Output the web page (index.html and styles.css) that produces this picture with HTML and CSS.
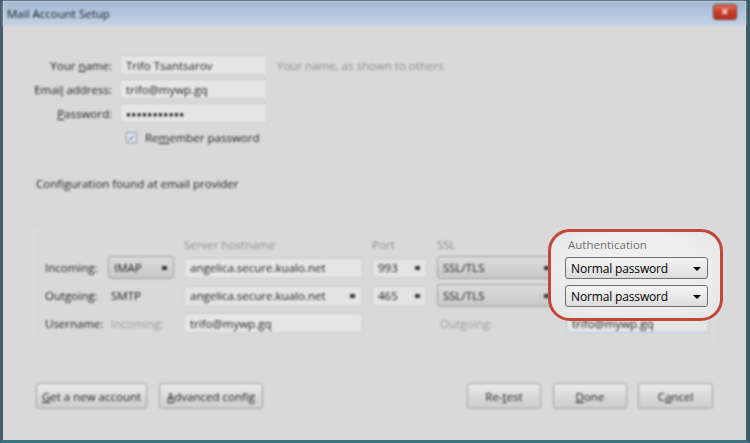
FILE: index.html
```html
<!DOCTYPE html>
<html>
<head>
<meta charset="utf-8">
<link rel="stylesheet" href="styles.css">
</head>
<body>
<div class="window">
  <div class="titlebar blur">
    <span class="title">Mail Account Setup</span>
    <div class="close">✕</div>
  </div>
  <div class="content blur">
    <div class="ident">
      <label class="lbl">Your <u>n</u>ame:</label>
      <div class="input">Trifo Tsantsarov</div>
      <span class="hint">Your name, as shown to others</span>
      <label class="lbl">Emai<u>l</u> address:</label>
      <div class="input">trifo@mywp.gq</div>
      <span></span>
      <label class="lbl"><u>P</u>assword:</label>
      <div class="input dots">●●●●●●●●●●●</div>
      <span></span>
      <span></span>
      <div class="remember"><span class="check">✓</span><span>Re<u>m</u>ember password</span></div>
      <span></span>
    </div>
    <div class="status">Configuration found at email provider</div>
    <div class="panel">
      <span></span>
      <span></span>
      <span class="head">Server hostname</span>
      <span class="head">Port</span>
      <span class="head">SSL</span>
      <span class="head"></span>

      <span class="rowlbl">Incoming:</span>
      <div class="select">IMAP<i class="arr"></i></div>
      <div class="input">angelica.secure.kualo.net</div>
      <div class="input flat">993<i class="arr"></i></div>
      <div class="select">SSL/TLS<i class="arr"></i></div>
      <div class="select under"></div>

      <span class="rowlbl">Outgoing:</span>
      <span class="plain">SMTP</span>
      <div class="input flat">angelica.secure.kualo.net<i class="arr"></i></div>
      <div class="input flat">465<i class="arr"></i></div>
      <div class="select">SSL/TLS<i class="arr"></i></div>
      <div class="select under"></div>

      <span class="rowlbl">Username:</span>
      <span class="plain grey">Incoming:</span>
      <div class="input">trifo@mywp.gq</div>
      <span></span>
      <span class="plain grey">Outgoing:</span>
      <div class="input blue">trifo@mywp.gq</div>
    </div>
    <div class="buttons">
      <div class="group">
        <div class="btn w111"><u>G</u>et a new account</div>
        <div class="btn w104"><u>A</u>dvanced config</div>
      </div>
      <div class="group right">
        <div class="btn w74">Re-<u>t</u>est</div>
        <div class="btn w74"><u>D</u>one</div>
        <div class="btn w75">C<u>a</u>ncel</div>
      </div>
    </div>
  </div>
  <div class="highlight">
    <div class="auth-head">Authentication</div>
    <div class="auth-select">Normal password<i class="tri"></i></div>
    <div class="auth-select">Normal password<i class="tri"></i></div>
  </div>
</div>
</body>
</html>
```
FILE: styles.css
```css
* { box-sizing: border-box; }
html, body { margin: 0; padding: 0; }
body {
  width: 750px; height: 443px; overflow: hidden;
  font-family: "Open Sans", "Noto Sans", sans-serif;
  font-size: 11.5px; color: #1a1a1a;
  background: #6b8fa0;
}
u { text-decoration: underline; }
.window {
  position: relative;
  width: 750px; height: 443px;
  background: #d9d9d9;
  border-left: 3px solid #4a5d6c;
  border-right: 4px solid #3a5a66;
  border-bottom: 3px solid #3e7482;
  border-top: 1px solid #44566a;
  display: flex; flex-direction: column;
}
.blur { filter: blur(1.25px); }
.titlebar {
  height: 25px; flex: none;
  background: linear-gradient(#a3b9d2, #b5c8dd 60%, #c2d2e3);
  border-bottom: 1px solid #c9d5e2;
  display: flex; align-items: center; justify-content: space-between;
  padding: 0 9px 0 4px;
}
.title { font-size: 11.5px; color: #0f1822; }
.close {
  width: 24px; height: 16px; margin-top: -3px;
  background: linear-gradient(#e0725c, #c43a24 55%, #b83420);
  border: 1px solid #7a3a30; border-radius: 3px;
  color: #fff; font-size: 9px; font-weight: bold;
  display: flex; align-items: center; justify-content: center;
}
.content { flex: 1; padding-top: 29px; display: flex; flex-direction: column; }
.ident {
  display: grid;
  grid-template-columns: 109px 147px 1fr;
  column-gap: 8px; row-gap: 4px;
  grid-auto-rows: 20px;
  align-items: center;
}
.lbl { text-align: right; }
.hint { color: #8c8c8c; margin-left: 2px; }
.input {
  height: 20px; background: #e6e6e6;
  border: 1px solid #d2d2d2; border-top-color: #cacaca;
  display: flex; align-items: center; padding: 0 5px;
  position: relative; white-space: nowrap;
}
.dots { font-size: 8px; letter-spacing: 0.5px; }
.remember { display: flex; align-items: center; gap: 8px; padding-left: 6px; margin-top: 1px; }
.check {
  width: 11px; height: 11px; border: 1px solid #8e9bb0; background: #dfe6ef;
  font-size: 9px; line-height: 9px; text-align: center; color: #3a4a6a;
}
.status { margin: 29px 0 0 33px; }
.panel {
  margin: 38px 0 0 30px; width: 682px;
  border: 1px solid #e2e2e2; border-radius: 2px;
  padding: 7px 7px 7px 11px;
  display: grid;
  grid-template-columns: 53px 66px 178px 55px 119px 143px;
  grid-template-rows: 14px 23px 23px 22px;
  column-gap: 10px; row-gap: 5px;
  align-items: center;
}
.panel .input { height: 20px; }
.head { color: #8f8f8f; }
.plain { padding-left: 3px; }
.grey { color: #9a9a9a; }
.select {
  height: 23px; border: 1px solid #a3a3a3; border-radius: 3px;
  background: linear-gradient(#dcdcdc, #c8c8c8);
  display: flex; align-items: center; padding: 0 5px; position: relative;
}
.under { background: #e4e4e4; }
.arr {
  position: absolute; right: 6px; top: 50%; margin-top: -2px;
  width: 5px; height: 4px; background: #333; border-radius: 1px;
}
.flat { background: #e4e4e4; }
.blue { border-color: #b9cbdc; }
.buttons {
  margin-top: 41px; padding: 0 33px 0 33px;
  display: flex; justify-content: space-between;
}
.group { display: flex; gap: 12px; }
.group.right { gap: 12px; }
.group.right .btn:last-child { margin-left: -1px; }
.btn {
  height: 26px; border: 1px solid #a2a2a2; border-radius: 3px;
  background: linear-gradient(#ececec, #dadada 50%, #cecece);
  display: flex; align-items: center; justify-content: center;
}
.w111 { width: 111px; } .w104 { width: 104px; }
.w74 { width: 74px; } .w75 { width: 75px; }
.highlight {
  position: absolute; left: 545px; top: 228px;
  width: 175px; height: 92px;
  border: 3px solid #c1473a; border-radius: 22px;
  background: radial-gradient(ellipse at 50% 45%, #eeeeee 55%, #e4e4e4 100%);
  padding: 6px 12px 0 14px;
  display: flex; flex-direction: column;
  font-family: "Open Sans", sans-serif;
}
.auth-head { color: #707070; font-size: 11.5px; line-height: 14px; padding-left: 3px; margin-bottom: 5px; }
.auth-select {
  height: 22px; border: 1px solid #707070; border-radius: 3px;
  background: linear-gradient(#f4f4f4, #e9e9e9 50%, #dcdcdc);
  font-size: 12px; letter-spacing: -0.15px; color: #000;
  display: flex; align-items: center; padding: 0 5px; position: relative;
  margin-bottom: 6px;
}
.tri {
  position: absolute; right: 6px; top: 9px;
  width: 0; height: 0;
  border-left: 4px solid transparent; border-right: 4px solid transparent;
  border-top: 4px solid #000;
}
```
